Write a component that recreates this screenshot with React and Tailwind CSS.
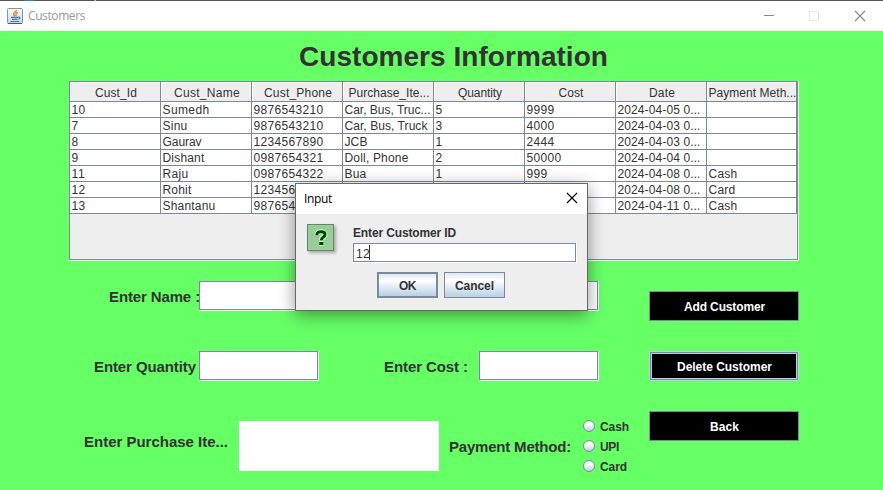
import React, { useLayoutEffect, useRef } from "react";

/* Advance widths of the 12px table face, grouped by pixel width. */
const ADVANCES = { 3: "ijltIf ,.", 4: "r-", 5: "vyx", 6: "sckzJ", 8: "SBPE", 9: "CDRGNQ", 11: "mM" };
const advance = (text) =>
  [...text].reduce((sum, ch) => {
    const hit = Object.keys(ADVANCES).find((k) => ADVANCES[k].includes(ch));
    return sum + (hit ? Number(hit) : 7);
  }, 0);

/* Text whose tracking is adjusted so that it occupies a given width. */
function Fit({ children, w, className = "" }) {
  const ref = useRef(null);
  const target = w ?? advance(children);
  useLayoutEffect(() => {
    const el = ref.current;
    el.style.letterSpacing = "0px";
    const natural = el.getBoundingClientRect().width;
    el.style.letterSpacing = `${(target - natural) / children.length}px`;
  }, [children, target]);
  return (
    <span ref={ref} className={`inline-block whitespace-pre ${className}`}>
      {children}
    </span>
  );
}

const columns = ["Cust_Id", "Cust_Name", "Cust_Phone", "Purchase_Ite...", "Quantity", "Cost", "Date", "Payment Meth..."];
const rows = [
  ["10", "Sumedh", "9876543210", "Car, Bus, Truc...", "5", "9999", "2024-04-05 0...", ""],
  ["7", "Sinu", "9876543210", "Car, Bus, Truck", "3", "4000", "2024-04-03 0...", ""],
  ["8", "Gaurav", "1234567890", "JCB", "1", "2444", "2024-04-03 0...", ""],
  ["9", "Dishant", "0987654321", "Doll, Phone", "2", "50000", "2024-04-04 0...", ""],
  ["11", "Raju", "0987654322", "Bua", "1", "999", "2024-04-08 0...", "Cash"],
  ["12", "Rohit", "123456", "", "", "", "2024-04-08 0...", "Card"],
  ["13", "Shantanu", "987654", "", "", "", "2024-04-11 0...", "Cash"],
];

function Field({ className = "", children }) {
  return (
    <div className={`shrink-0 border-r border-b border-white ${className}`}>
      <div className="flex h-full w-full items-center border border-[#7a8a99] bg-white">{children}</div>
    </div>
  );
}

function Label({ children, w, className = "" }) {
  return (
    <div className={`shrink-0 text-[15px] leading-[18px] font-bold ${className}`}>
      <Fit w={w}>{children}</Fit>
    </div>
  );
}

function Radio({ children, w }) {
  return (
    <div className="flex h-5 items-center">
      <svg width="12" height="12" viewBox="0 0 12 12">
        <defs>
          <linearGradient id="radio" x1="0" y1="0" x2="0" y2="1">
            <stop offset="0" stopColor="#dde8f3" />
            <stop offset="0.3" stopColor="#ffffff" />
            <stop offset="1" stopColor="#b8cfe5" />
          </linearGradient>
        </defs>
        <circle cx="6" cy="6" r="5.5" fill="url(#radio)" stroke="#7a8a99" />
      </svg>
      <Fit w={w} className="ml-[5px] pt-px text-[12px] leading-[14px] font-bold">{children}</Fit>
    </div>
  );
}

function JavaIcon() {
  return (
    <svg width="16" height="16" viewBox="0 0 16 16" className="shrink-0">
      <defs>
        <linearGradient id="java" x1="0" y1="0" x2="0" y2="1">
          <stop offset="0" stopColor="#ffffff" />
          <stop offset="1" stopColor="#c6d2dc" />
        </linearGradient>
      </defs>
      <rect x="0.5" y="0.5" width="15" height="15" rx="1" fill="url(#java)" stroke="#8094a3" />
      <path d="M1 15.5h14" stroke="#3f6079" />
      <path d="M9.500 2c.3 1.800-3.500 2.400-3 4.200.2.800 1 1.200 1.400 2M11 4.300c-1.400.4-2.400 1.200-2 2 .3.600.5 1.100-.1 1.900" fill="none" stroke="#ee7f2c" strokeWidth="1.400" />
      <path d="M4 9.400h7M5 11.400h5.500M3.500 13.500h8.500M11 9.200c2.600-.6 2.600 1.700.2 2.100" fill="none" stroke="#47769a" strokeWidth="1.100" />
    </svg>
  );
}

function DialogWindow() {
  return (
    <div className="absolute top-[183px] left-[295px] h-[128px] w-[293px] border border-[#686868] bg-[#eeeeee] shadow-[0_4px_16px_rgba(0,0,0,0.42)]">
      <div className="flex h-[30px] items-start justify-between bg-white pr-[9px] pl-2">
        <Fit w={28} className="pt-[7px] font-['Open_Sans',sans-serif] text-[12px] leading-4 text-black">Input</Fit>
        <svg width="12" height="12" viewBox="0 0 12 12" className="mt-2">
          <path d="M1 1l10 10M11 1L1 11" stroke="#000" strokeWidth="1.1" />
        </svg>
      </div>
      <div className="flex pt-[10px] pl-[11px]">
        <div className="flex h-[27px] w-[27px] shrink-0 items-center justify-center border border-[#5f8a64] bg-[#99cc99] shadow-[2px_2px_3px_rgba(0,0,0,0.3)]">
          <svg width="16" height="20" viewBox="0 0 16 20">
            <path
              d="M3.800 7.300C3.800 4 6 3.800 8 3.800S12 4.600 12 6.500C12 9.300 8.300 9 8.300 12.300M6.300 15.600h4"
              fill="none"
              stroke="#ccffcc"
              strokeWidth="5"
            />
            <path
              d="M3.800 7.300C3.800 4 6 3.800 8 3.800S12 4.600 12 6.500C12 9.300 8.300 9 8.300 12.300M6.300 15.600h4"
              fill="none"
              stroke="#004400"
              strokeWidth="3"
            />
          </svg>
        </div>
        <div className="ml-[19px]">
          <div className="h-[19px] pt-[2px] text-[12px] leading-[14px] font-bold">
            <Fit w={103}>Enter Customer ID</Fit>
          </div>
          <Field className="h-5 w-[224px]">
            <Fit w={14} className="ml-[2px] pt-[2px] text-[12px] leading-[14px]">12</Fit>
            <span className="-ml-px h-[15px] w-px bg-[#333333]" />
          </Field>
        </div>
      </div>
      <div className="mt-[9px] flex gap-[6px] pl-[81px] text-[12px] leading-[14px] font-bold">
        <div className="flex h-[26px] w-[61px] items-center justify-center border-2 border-[#7a8a99] bg-linear-to-b from-[#dde8f3] via-white via-30% to-[#b8cfe5] pt-px">
          <Fit w={17}>OK</Fit>
        </div>
        <div className="flex h-[26px] w-[61px] items-center justify-center border border-[#7a8a99] bg-linear-to-b from-[#dde8f3] via-white via-30% to-[#b8cfe5] pt-px">
          <Fit w={39}>Cancel</Fit>
        </div>
      </div>
    </div>
  );
}

export default function App() {
  return (
    <div className="relative h-[490px] w-[883px] overflow-hidden bg-[#66ff66] font-['Liberation_Sans',Arial,sans-serif] text-[#333333]">
      <div className="flex h-px bg-[#5a5558]">
        <span className="ml-[25px] w-[9px] bg-[#2f86b5]" />
        <span className="ml-[58px] w-[2px] bg-[#4030a0]" />
        <span className="w-[2px] bg-[#c9b870]" />
      </div>
      <header className="flex h-[30px] items-center bg-white pl-[7px]">
        <JavaIcon />
        <Fit w={57} className="ml-[5px] font-['Open_Sans',sans-serif] text-[12px] leading-4 text-[#999999]">Customers</Fit>
        <svg width="103" height="12" viewBox="0 0 103 12" className="mr-[17px] ml-auto" fill="none">
          <path d="M1 5.500h10" stroke="#888888" />
          <rect x="46.500" y="1.500" width="9" height="9" stroke="#e6e6e6" />
          <path d="M92 1l10 10M102 1L92 11" stroke="#888888" strokeWidth="1.100" />
        </svg>
      </header>

      <main className="pr-[84px] pl-[69px]">
        <h1 className="h-[50px] pt-[10px] pl-[230px] text-[28px] leading-8 font-bold">
          <Fit w={309}>Customers Information</Fit>
        </h1>

        <section className="h-[180px] border-r border-b border-white text-[12px] leading-[14px]">
          <div className="h-full border border-[#7a8a99] bg-[#eeeeee]">
            <div className="grid h-5 grid-cols-[repeat(7,91px)_90px]">
              {columns.map((c) => (
                <div key={c} className="border-r border-b border-[#7a8a99]">
                  <div className="flex h-full items-center justify-center border-t border-l border-white pt-[2px] pl-px">
                    <Fit>{c}</Fit>
                  </div>
                </div>
              ))}
            </div>
            {rows.map((r) => (
              <div key={r[0]} className="grid h-4 grid-cols-[repeat(7,91px)_90px] bg-white">
                {r.map((v, i) => (
                  <div key={i} className="overflow-hidden border-r border-b border-[#7a8a99] pt-px pl-[1.5px]">
                    {v && <Fit>{v}</Fit>}
                  </div>
                ))}
              </div>
            ))}
          </div>
        </section>

        <div className="flex">
          <form className="w-[580px] shrink-0 pt-5">
            <div className="flex h-[30px] items-center pl-10">
              <Label w={91} className="w-[90px] overflow-hidden pt-px">Enter Name :</Label>
              <Field className="h-[30px] w-[120px]" />
              <Field className="ml-[160px] h-[30px] w-[120px]" />
            </div>
            <div className="mt-10 flex h-[30px] items-center pl-[25px]">
              <Label w={102} className="w-[105px] pt-px">Enter Quantity</Label>
              <Field className="h-[30px] w-[120px]" />
              <Label w={84} className="ml-[65px] w-[95px] pt-px">Enter Cost :</Label>
              <Field className="h-[30px] w-[120px]" />
            </div>
            <div className="mt-[35px] flex h-[60px] items-center pl-[15px]">
              <Label w={144} className="w-[155px] pb-[9px]">Enter Purchase Ite...</Label>
              <div className="h-[50px] w-[200px] shrink-0 bg-white" />
              <Label w={122} className="ml-[10px] w-[134px] pt-px">Payment Method:</Label>
              <div>
                <Radio w={29}>Cash</Radio>
                <Radio w={19}>UPI</Radio>
                <Radio w={27}>Card</Radio>
              </div>
            </div>
          </form>

          <div className="flex w-[150px] flex-col gap-[30px] pt-[30px] text-[12px] leading-[14px] font-bold text-white">
            <div className="flex h-[30px] items-center justify-center border border-[#7a8a99] bg-black pt-px pl-px">
              <Fit w={81}>Add Customer</Fit>
            </div>
            <div className="h-[30px] border border-[#b8cfe5]">
              <div className="h-full border border-[#7a8a99]">
                <div className="flex h-full items-center justify-center border border-[#b8cfe5] bg-black pt-px pl-px">
                  <Fit w={95}>Delete Customer</Fit>
                </div>
              </div>
            </div>
            <div className="flex h-[30px] items-center justify-center border border-[#7a8a99] bg-black pt-px pl-px">
              <Fit w={29}>Back</Fit>
            </div>
          </div>
        </div>
      </main>

      <DialogWindow />
    </div>
  );
}
